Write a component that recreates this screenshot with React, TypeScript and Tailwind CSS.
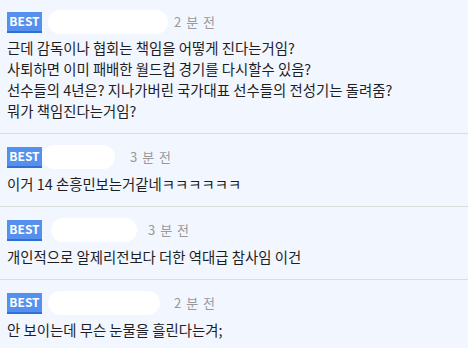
const comments = [
  {
    pill: "ml-[6px] w-[120px]",
    time: "ml-[6px]",
    ago: "2 분 전",
    lines: [
      "근데 감독이나 협회는 책임을 어떻게 진다는거임?",
      "사퇴하면 이미 패배한 월드컵 경기를 다시할수 있음?",
      "선수들의 4년은? 지나가버린 국가대표 선수들의 전성기는 돌려줌?",
      "뭐가 책임진다는거임?",
    ],
  },
  {
    pill: "ml-0 w-[73px]",
    time: "ml-[15px]",
    ago: "3 분 전",
    lines: ["이거 14 손흥민보는거같네ㅋㅋㅋㅋㅋㅋ"],
  },
  {
    pill: "ml-[9px] w-[86px]",
    time: "ml-[11px]",
    ago: "3 분 전",
    lines: ["개인적으로 알제리전보다 더한 역대급 참사임 이건"],
  },
  {
    pill: "ml-[6px] w-[112px]",
    time: "ml-[14px]",
    ago: "2 분 전",
    lines: ["안 보이는데 무슨 눈물을 흘린다는겨;"],
  },
];

export default function App() {
  return (
    <main className="w-[468px] h-[348px] overflow-hidden bg-[#f1f6ff] font-['Noto_Sans_CJK_KR',sans-serif] text-[#1e1e1e]">
      {comments.map((c, i) => (
        <div
          key={i}
          className={`px-[7px] pb-[12px] border-b border-[#dcdcdc] ${i === 0 ? "pt-[10px]" : "pt-[11px]"}`}
        >
          <div className="flex items-center h-6">
            <span className="flex items-center justify-center w-[35px] h-[21px] bg-[#5590ee] border-b-2 border-[#2f6fd6] text-white text-[12px] font-bold leading-none">
              BEST
            </span>
            <span className={`h-6 rounded-full bg-white ${c.pill}`} />
            <span className={`text-[13px] text-[#999] tracking-[1px] ${c.time}`}>{c.ago}</span>
          </div>
          <div className={`text-[14.4px] leading-[21px] ${i === 0 ? "mt-[3px]" : "mt-1"}`}>
            {c.lines.map((l, j) => (
              <p key={j}>{l}</p>
            ))}
          </div>
        </div>
      ))}
    </main>
  );
}
